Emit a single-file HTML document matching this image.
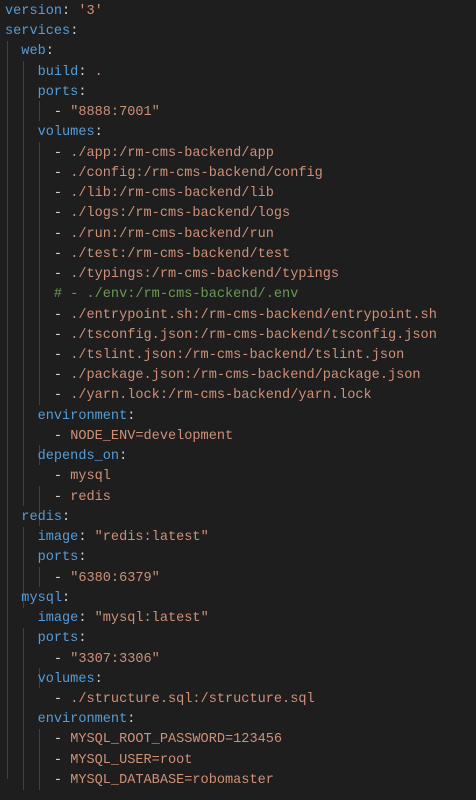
<!DOCTYPE html>
<html><head><style>
html,body{margin:0;padding:0;background:#1e1e1e;width:476px;height:800px;overflow:hidden}
pre{margin:0;padding:2px 0 0 5px;font-family:"Liberation Mono",monospace;font-size:13.58px;line-height:20.24px;color:#d4d4d4;position:relative}
.k{color:#569cd6}.s{color:#ce9178}.c{color:#6a9955}
.g{position:absolute;width:1px;background:#404040}
</style></head><body>
<div class="g" style="left:7px;top:41px;height:738px"></div>
<div class="g" style="left:23px;top:61px;height:445px"></div>
<div class="g" style="left:23px;top:527px;height:81px"></div>
<div class="g" style="left:23px;top:628px;height:162px"></div>
<div class="g" style="left:39px;top:101px;height:20px"></div>
<div class="g" style="left:39px;top:142px;height:263px"></div>
<div class="g" style="left:39px;top:445px;height:20px"></div>
<div class="g" style="left:39px;top:486px;height:40px"></div>
<div class="g" style="left:39px;top:567px;height:20px"></div>
<div class="g" style="left:39px;top:668px;height:20px"></div>
<div class="g" style="left:39px;top:729px;height:61px"></div>
<pre><span class="k">version</span>: <span class="s">'3'</span>
<span class="k">services</span>:
  <span class="k">web</span>:
    <span class="k">build</span>: <span class="s">.</span>
    <span class="k">ports</span>:
      - <span class="s">"8888:7001"</span>
    <span class="k">volumes</span>:
      - <span class="s">./app:/rm-cms-backend/app</span>
      - <span class="s">./config:/rm-cms-backend/config</span>
      - <span class="s">./lib:/rm-cms-backend/lib</span>
      - <span class="s">./logs:/rm-cms-backend/logs</span>
      - <span class="s">./run:/rm-cms-backend/run</span>
      - <span class="s">./test:/rm-cms-backend/test</span>
      - <span class="s">./typings:/rm-cms-backend/typings</span>
      <span class="c"># - ./env:/rm-cms-backend/.env</span>
      - <span class="s">./entrypoint.sh:/rm-cms-backend/entrypoint.sh</span>
      - <span class="s">./tsconfig.json:/rm-cms-backend/tsconfig.json</span>
      - <span class="s">./tslint.json:/rm-cms-backend/tslint.json</span>
      - <span class="s">./package.json:/rm-cms-backend/package.json</span>
      - <span class="s">./yarn.lock:/rm-cms-backend/yarn.lock</span>
    <span class="k">environment</span>:
      - <span class="s">NODE_ENV=development</span>
    <span class="k">depends_on</span>:
      - <span class="s">mysql</span>
      - <span class="s">redis</span>
  <span class="k">redis</span>:
    <span class="k">image</span>: <span class="s">"redis:latest"</span>
    <span class="k">ports</span>:
      - <span class="s">"6380:6379"</span>
  <span class="k">mysql</span>:
    <span class="k">image</span>: <span class="s">"mysql:latest"</span>
    <span class="k">ports</span>:
      - <span class="s">"3307:3306"</span>
    <span class="k">volumes</span>:
      - <span class="s">./structure.sql:/structure.sql</span>
    <span class="k">environment</span>:
      - <span class="s">MYSQL_ROOT_PASSWORD=123456</span>
      - <span class="s">MYSQL_USER=root</span>
      - <span class="s">MYSQL_DATABASE=robomaster</span></pre>
</body></html>
